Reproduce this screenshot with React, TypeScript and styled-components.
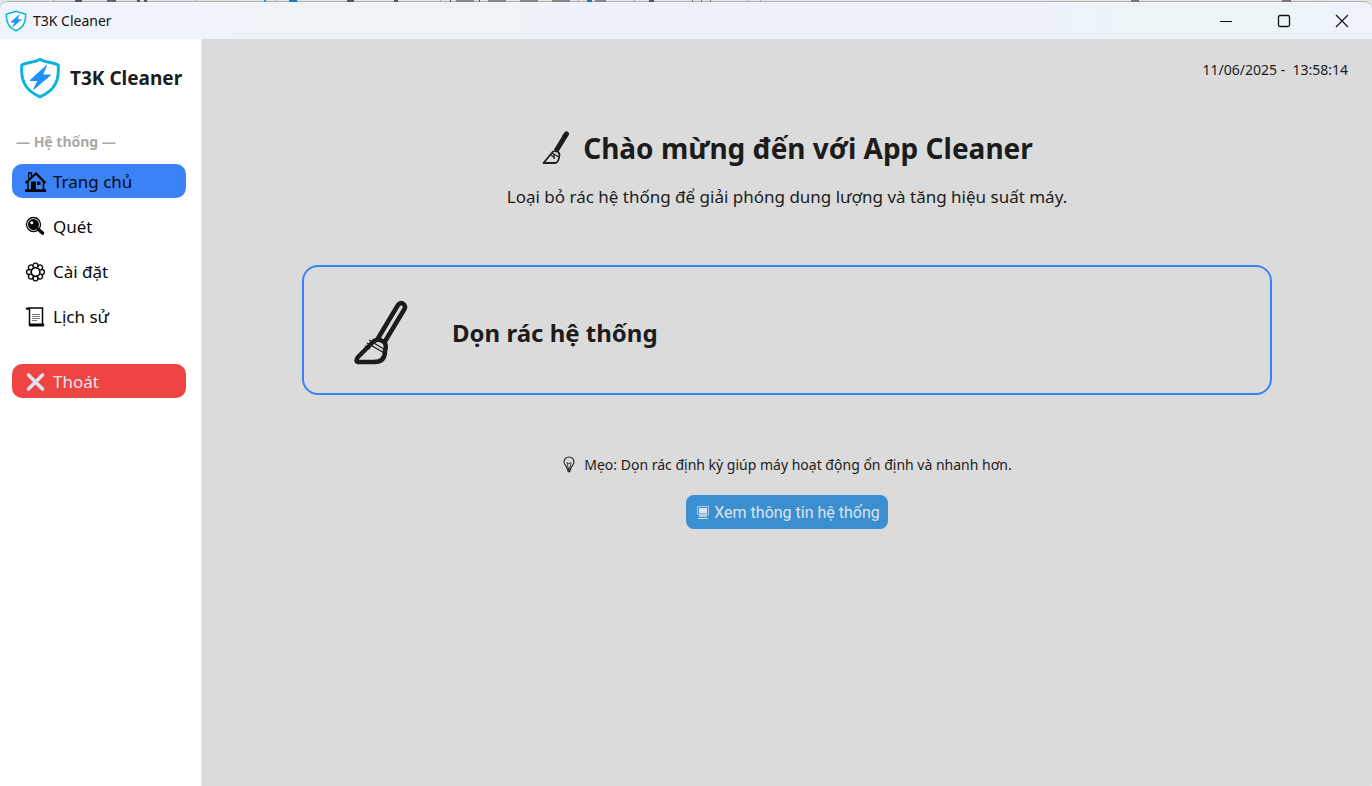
import React from "react";
import styled, { createGlobalStyle } from "styled-components";

const GlobalStyle = createGlobalStyle`
  * { box-sizing: border-box; }
  html, body, #root { height: 100%; margin: 0; }
  body {
    background: #e4e4e4;
    color: #1c1c1c;
    font-family: "Noto Sans", "Open Sans", sans-serif;
  }
  h1, h2, p { margin: 0; }
  button { font-family: inherit; border: 0; padding: 0; cursor: pointer; }
`;

const Screen = styled.div`
  display: flex;
  flex-direction: column;
  min-height: 100%;
`;

const Backdrop = styled.div`
  height: 1px;
  overflow: visible;
  svg { display: block; position: relative; z-index: 1; }
`;

const Window = styled.div`
  flex: 1;
  display: flex;
  flex-direction: column;
  overflow: hidden;
  border-top: 1px solid #aeb0b2;
  border-radius: 8px 8px 4px 0;
  background: #dbdbdb;
`;

const TitleBar = styled.header`
  display: flex;
  align-items: center;
  height: 37px;
  padding-left: 5px;
  background: linear-gradient(90deg, #eff3fb 0 15%, #eef3f7 20% 36%, #edf2fa 42% 76%, #ecf4f8 82% 94%, #eef3fb 98%);
`;

const WindowTitle = styled.span`
  flex: 1;
  margin-left: 6px;
  font-size: 14px;
  line-height: 20px;
  color: #111;
`;

const Caption = styled.button`
  display: grid;
  place-items: center;
  width: 58px;
  height: 37px;
  background: none;
  color: #111;
`;

const CaptionGroup = styled.div`
  display: flex;
  height: 37px;
  padding: 0 1px 2px 0;
`;

const Body = styled.div`
  flex: 1;
  display: flex;
`;

const Sidebar = styled.aside`
  width: 202px;
  flex: none;
  padding: 18px 15px 18px 12px;
  background: #fff;
  border-right: 1px solid #e3e3e3;
`;

const Brand = styled.div`
  display: flex;
  align-items: center;
  gap: 9px;
  margin-left: 7px;
  height: 42px;
  font-size: 19px;
  font-weight: 700;
  white-space: nowrap;
`;

const SectionLabel = styled.p`
  margin: 33px 0 12px 4px;
  font-size: 14px;
  line-height: 20px;
  font-weight: 700;
  color: #a9a9a9;
`;

const Nav = styled.nav`
  display: flex;
  flex-direction: column;
  gap: 11px;
`;

const NavButton = styled.button<{ $tone?: "active" | "danger" }>`
  display: flex;
  align-items: center;
  gap: 6px;
  width: 100%;
  height: 34px;
  padding: 1px 12px 0;
  border-radius: 10px;
  font-family: "Noto Sans", sans-serif;
  font-size: 17px;
  line-height: 24px;
  background: ${(p) => (p.$tone === "active" ? "#3b82f6" : p.$tone === "danger" ? "#ef4444" : "none")};
  color: ${(p) => (p.$tone === "danger" ? "#dce4ee" : "#0a0a0a")};
  margin-top: ${(p) => (p.$tone === "danger" ? "20px" : "0")};
`;

const Main = styled.main`
  flex: 1;
  display: flex;
  flex-direction: column;
  align-items: center;
  padding: 21px 24px;
`;

const Clock = styled.time`
  align-self: flex-end;
  font-size: 14px;
  line-height: 20px;
  white-space: pre;
`;

const Heading = styled.h1`
  display: flex;
  align-items: center;
  gap: 12px;
  margin-top: 48px;
  font-size: 28px;
  line-height: 40px;
`;

const Lead = styled.p`
  margin-top: 17px;
  font-size: 17px;
  line-height: 24px;
`;

const Card = styled.section`
  display: flex;
  align-items: center;
  align-self: stretch;
  gap: 44px;
  height: 130px;
  margin: 56px 76px 0;
  padding: 6px 0 0 48px;
  border: 2px solid #3b82f6;
  border-radius: 16px;
`;

const CardTitle = styled.h2`
  font-size: 24px;
  line-height: 32px;
`;

const Tip = styled.p`
  display: flex;
  align-items: center;
  gap: 8px;
  margin-top: 60px;
  font-size: 14px;
  line-height: 20px;
`;

const InfoButton = styled.button`
  display: flex;
  align-items: center;
  gap: 4px;
  height: 34px;
  margin-top: 20px;
  padding: 0 8px 0 10px;
  border-radius: 8px;
  background: #3b8ed0;
  color: #dce4ee;
  font-family: Roboto, sans-serif;
  font-size: 16px;
`;

const marks: [number, number, string][] = [
  [53, 1, "#aaa"], [75, 7, "#555"], [107, 9, "#666"], [137, 3, "#555"], [144, 3, "#555"], [195, 1, "#aaa"],
  [264, 2, "#2a8fd0"], [275, 1, "#aaa"], [289, 8, "#1f77bd"], [347, 7, "#555"], [394, 4, "#555"],
  [440, 1, "#aaa"], [450, 1, "#555"], [456, 18, "#888"], [479, 1, "#555"], [488, 18, "#888"],
  [520, 18, "#888"], [552, 18, "#888"], [578, 1, "#aaa"], [587, 5, "#1f77bd"], [595, 11, "#888"],
  [634, 1, "#aaa"], [649, 5, "#555"], [692, 1, "#777"], [701, 1, "#777"], [710, 1, "#777"],
  [748, 1, "#aaa"], [760, 1, "#aaa"], [1131, 8, "#777"], [1282, 9, "#777"],
];

const BackdropMarks = () => (
  <svg width="1372" height="2" aria-hidden="true">
    {marks.map(([x, w, fill]) => (
      <rect key={x} x={x} y="0" width={w} height="2" fill={fill} />
    ))}
  </svg>
);

const Shield = ({ size }: { size: number }) => (
  <svg width={size} height={size} viewBox="0 0 42 42" aria-hidden="true">
    <path
      d="M21 2.3C16 5.5 9 5 2.8 8C1.6 22 5 33 21 39.8C37 33 40.4 22 39.2 8C33 5 26 5.5 21 2.3Z"
      fill="#fff" stroke="#0bb4dc" strokeWidth="3" strokeLinejoin="round"
    />
    <path d="M27.5 8.5L11 23.5H19L14.5 32.5L31.5 18H23.5Z" fill="#1e90ff" stroke="#1e90ff" strokeLinejoin="round" />
  </svg>
);

const House = () => (
  <svg width="23" height="22" viewBox="0 0 23 22" aria-hidden="true">
    <path d="M1.5 12L12 2.5L21.5 12" fill="none" stroke="#050505" strokeWidth="2.2" />
    <path d="M4.7 7.5V2H7.5V5.2" fill="none" stroke="#050505" strokeWidth="1.3" />
    <path d="M4 10.5V19M19.5 10.5V19" stroke="#050505" strokeWidth="1.6" />
    <path d="M7 10.5H12V19H7Z" fill="#050505" />
    <path d="M13 10.5H16.5V14H13Z" fill="#050505" />
    <path d="M1 18.2H22V21H1Z" fill="#050505" />
  </svg>
);

const Magnifier = () => (
  <svg width="23" height="22" viewBox="0 0 23 22" aria-hidden="true">
    <circle cx="9.500" cy="8.500" r="7" fill="#fff" stroke="#050505" strokeWidth="1.3" />
    <circle cx="9.500" cy="8.500" r="5.500" fill="#050505" />
    <circle cx="7.800" cy="6.800" r="1.500" fill="#fff" />
    <path d="M14.500 13.500L18.500 17" stroke="#050505" strokeWidth="3.6" strokeLinecap="round" />
  </svg>
);

const Gear = () => (
  <svg width="23" height="22" viewBox="0 0 23 22" fill="none" stroke="#050505" aria-hidden="true">
    {[0, 45, 90, 135, 180, 225, 270, 315].map((a) => (
      <path key={a} transform={`rotate(${a} 11.5 11)`} d="M9.3 6C7.3 .8 15.7 .8 13.7 6" strokeWidth="1.400" />
    ))}
    <circle cx="11.5" cy="11" r="4.4" strokeWidth="1.700" />
  </svg>
);

const Scroll = () => (
  <svg width="23" height="22" viewBox="0 0 23 22" fill="none" stroke="#050505" aria-hidden="true">
    <path d="M4.5 2H18.5V18" strokeWidth="1.5" />
    <path d="M5.5 2.5V18" strokeWidth="1.5" />
    <path d="M3 2.6H5" strokeWidth="2.400" strokeLinecap="round" />
    <path d="M6 19H19" strokeWidth="2.8" strokeLinecap="round" />
    <path d="M8 8.5H16M8 10.5H16M8 12.5H16M8 14.5H13" strokeWidth="1" stroke="#777" />
  </svg>
);

const Cross = () => (
  <svg width="23" height="22" viewBox="0 0 23 22" aria-hidden="true">
    <path d="M4.5 4L18.5 18M18.5 4L4.5 18" stroke="#dce4ee" strokeWidth="3.6" strokeLinecap="round" />
  </svg>
);

const BroomLarge = () => (
  <svg width="56" height="66" viewBox="0 0 56 66" fill="none" stroke="#1c1c1c" aria-hidden="true">
    <path d="M25 40L46 5Q48.5 1.8 51.5 4Q54 6 52.5 9L32 43" strokeWidth="4.500" strokeLinejoin="round" />
    <path d="M22 41Q27 38 32 42Q35 45 33 51Q33 62 22 62H6Q3 61 6 57Z" strokeWidth="4.500" strokeLinejoin="round" />
    <path d="M17 40L35 51M15 43L34 54M13 46L18 49" strokeWidth="1.3" />
  </svg>
);

const BroomSmall = () => (
  <svg width="30" height="34" viewBox="0 0 30 34" fill="none" stroke="#1c1c1c" aria-hidden="true">
    <path d="M15 20L24.500 4.500" strokeWidth="5" />
    <path d="M24 5L25.500 3" strokeWidth="5" strokeLinecap="round" />
    <path d="M12 20.500Q17 19 18.500 23Q18 32 14 32H2.500Z" strokeWidth="1.8" strokeLinejoin="round" />
    <path d="M11 22L18 26M10 24L14 27M13 23V28" strokeWidth="1.2" />
  </svg>
);

const Bulb = () => (
  <svg width="14" height="18" viewBox="0 0 14 18" fill="none" stroke="#222" aria-hidden="true">
    <path d="M4.8 12C4.8 9.500 2 9 2 6A5 5 0 0 1 12 6C12 9 9.200 9.500 9.200 12Z" strokeWidth="1.1" />
    <path d="M6 11.500L5 6.500L7 8L9 6.500L8 11.500" strokeWidth="0.8" />
    <path d="M4.800 13.300H9.200M5.500 15.300H8.500" strokeWidth="1.7" />
  </svg>
);

const Computer = () => (
  <svg width="14" height="16" viewBox="0 0 14 16" fill="none" stroke="#dce4ee" aria-hidden="true">
    <rect x="1.500" y="2.500" width="11" height="8" strokeOpacity="0.7" />
    <rect x="3" y="4" width="8" height="5.500" fill="#dce4ee" stroke="none" />
    <path d="M3 12H11" strokeWidth="1.500" />
    <path d="M2 14.500H12" />
  </svg>
);

const navItems = [
  { label: "Trang chủ", icon: <House />, tone: "active" as const },
  { label: "Quét", icon: <Magnifier /> },
  { label: "Cài đặt", icon: <Gear /> },
  { label: "Lịch sử", icon: <Scroll /> },
  { label: "Thoát", icon: <Cross />, tone: "danger" as const },
];

export default function App() {
  return (
    <Screen>
      <GlobalStyle />
      <Backdrop><BackdropMarks /></Backdrop>
      <Window>
        <TitleBar>
          <Shield size={22} />
          <WindowTitle>T3K Cleaner</WindowTitle>
          <CaptionGroup>
            <Caption aria-label="Minimize">
              <svg width="14" height="14"><path d="M1 7.500H13" stroke="currentColor" /></svg>
            </Caption>
            <Caption aria-label="Maximize">
              <svg width="14" height="14"><rect x="1.500" y="1.500" width="11" height="11" rx="1.500" fill="none" stroke="currentColor" strokeWidth="1.300" /></svg>
            </Caption>
            <Caption aria-label="Close">
              <svg width="14" height="14"><path d="M1 1L13 13M13 1L1 13" stroke="currentColor" strokeWidth="1.200" /></svg>
            </Caption>
          </CaptionGroup>
        </TitleBar>
        <Body>
          <Sidebar>
            <Brand><Shield size={42} />T3K Cleaner</Brand>
            <SectionLabel>— Hệ thống —</SectionLabel>
            <Nav>
              {navItems.map((item) => (
                <NavButton key={item.label} $tone={item.tone}>{item.icon}{item.label}</NavButton>
              ))}
            </Nav>
          </Sidebar>
          <Main>
            <Clock>{"11/06/2025 -  13:58:14"}</Clock>
            <Heading><BroomSmall />Chào mừng đến với App Cleaner</Heading>
            <Lead>Loại bỏ rác hệ thống để giải phóng dung lượng và tăng hiệu suất máy.</Lead>
            <Card><BroomLarge /><CardTitle>Dọn rác hệ thống</CardTitle></Card>
            <Tip><Bulb />Mẹo: Dọn rác định kỳ giúp máy hoạt động ổn định và nhanh hơn.</Tip>
            <InfoButton><Computer />Xem thông tin hệ thống</InfoButton>
          </Main>
        </Body>
      </Window>
    </Screen>
  );
}
